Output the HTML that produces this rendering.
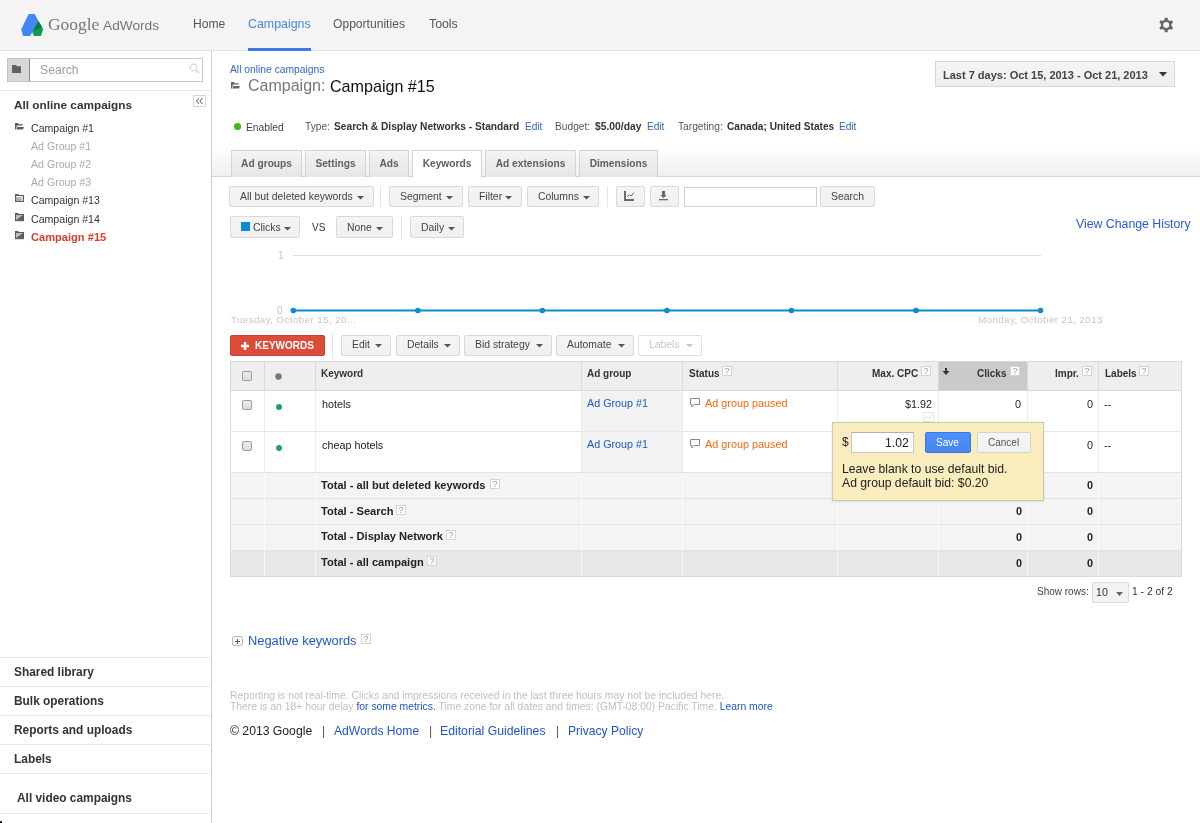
<!DOCTYPE html>
<html><head><meta charset="utf-8"><style>
html,body{margin:0;padding:0;width:1200px;height:823px;overflow:hidden;background:#fff;}
body{position:relative;font-family:"Liberation Sans",sans-serif;}
.t{position:absolute;white-space:nowrap;will-change:transform;}
.r{position:absolute;display:block;}
</style></head><body>
<div class="r" style="left:0px;top:0px;width:1200px;height:50px;background:#f4f4f4;"></div>
<div class="r" style="left:0px;top:50px;width:1200px;height:1px;background:#e1e1e1;"></div>
<svg class="r" style="left:18px;top:10px;" width="30" height="30" viewBox="0 0 30 30"><path d="M10.6,4.3 C11.3,3.8 16,3.8 16.8,4.3 L20.4,11 L12.1,25.9 L5.1,25.9 L3.2,19.2 Z" fill="#4285f4"/><path d="M20.4,11 L25.1,19.3 L23,25.9 L16,25.9 L14.1,22 Z" fill="#109d58"/><path d="M20.4,11 L24.1,17.2 L14.6,21.4 Z" fill="#0a7c3e"/></svg>
<div class="t " style="left:48.30px;top:16.27px;font-size:17.4px;line-height:17.4px;color:#72767b;font-family:'Liberation Serif',serif;">Google</div>
<div class="t " style="left:103.30px;top:19.30px;font-size:13.7px;line-height:13.7px;color:#72767b;">AdWords</div>
<div class="t " style="left:193.40px;top:18.36px;font-size:12.1px;line-height:12.1px;color:#555;">Home</div>
<div class="t " style="left:248.00px;top:18.30px;font-size:12.4px;line-height:12.4px;color:#4a86e8;">Campaigns</div>
<div class="t " style="left:333.40px;top:18.36px;font-size:12.1px;line-height:12.1px;color:#555;">Opportunities</div>
<div class="t " style="left:428.50px;top:18.19px;font-size:12.3px;line-height:12.3px;color:#555;">Tools</div>
<div class="r" style="left:248px;top:48px;width:63px;height:3px;background:#3b78e7;"></div>
<svg class="r" style="left:1158px;top:17px;" width="16" height="16" viewBox="0 0 16 16"><g transform="translate(8.2,8)" fill="#666"><rect x="-1.5" y="-7.2" width="3" height="3.7" rx="0.3" transform="rotate(0)"/><rect x="-1.5" y="-7.2" width="3" height="3.7" rx="0.3" transform="rotate(60)"/><rect x="-1.5" y="-7.2" width="3" height="3.7" rx="0.3" transform="rotate(120)"/><rect x="-1.5" y="-7.2" width="3" height="3.7" rx="0.3" transform="rotate(180)"/><rect x="-1.5" y="-7.2" width="3" height="3.7" rx="0.3" transform="rotate(240)"/><rect x="-1.5" y="-7.2" width="3" height="3.7" rx="0.3" transform="rotate(300)"/><circle r="5.4"/></g><circle cx="8.2" cy="8" r="3.0" fill="#f4f4f4"/></svg>
<div class="r" style="left:211px;top:51px;width:1px;height:772px;background:#cdcdcd;"></div>
<div class="r" style="left:7px;top:58px;width:23px;height:24px;background:#d8d8d8;border:1px solid #c6c6c6;box-sizing:border-box;border-right:1px solid #8f8f8f;"></div>
<svg class="r" style="left:12px;top:65px;" width="10" height="8" viewBox="0 0 10 8"><path d="M0,0 H4 L5,1.2 H9 V8 H0 Z" fill="#616161"/></svg>
<div class="r" style="left:30px;top:58px;width:173px;height:24px;background:#fff;border:1px solid #c9c9c9;border-left:none;box-sizing:border-box;"></div>
<div class="t " style="left:39.50px;top:64.47px;font-size:12.2px;line-height:12.2px;color:#9e9e9e;">Search</div>
<svg class="r" style="left:189px;top:63px;" width="11" height="11" viewBox="0 0 11 11"><circle cx="4.5" cy="4.5" r="3.3" fill="none" stroke="#ddd" stroke-width="1.4"/><path d="M7,7 L10,10" stroke="#ddd" stroke-width="1.8"/></svg>
<div class="r" style="left:0px;top:90px;width:211px;height:1px;background:#e5e5e5;"></div>
<div class="r" style="left:193px;top:95px;width:13px;height:12px;background:#fff;border:1px solid #d6d6d6;box-sizing:border-box;"></div>
<svg class="r" style="left:195px;top:97px;" width="10" height="8" viewBox="0 0 10 8"><path d="M4,1 L1.5,4 L4,7 M7.5,1 L5,4 L7.5,7" fill="none" stroke="#777" stroke-width="1.1"/></svg>
<div class="t " style="left:14.00px;top:99.91px;font-size:11.8px;line-height:11.8px;font-weight:bold;color:#333;">All online campaigns</div>
<div class="t " style="left:31.00px;top:123.13px;font-size:10.6px;line-height:10.6px;color:#333;">Campaign #1</div>
<svg class="r" style="left:15px;top:123px;" width="10" height="8" viewBox="0 0 10 8"><path d="M0,0 H2.8 L4,1.2 H7.8 V2.6 H2 L0.9,6.6 H0 Z" fill="#5c5c5c"/><path d="M2.4,4.1 H9 L7.9,6.6 H1.3 Z" fill="#5c5c5c"/></svg>
<div class="t " style="left:31.00px;top:141.23px;font-size:10.6px;line-height:10.6px;color:#aaa;">Ad Group #1</div>
<div class="t " style="left:31.00px;top:159.33px;font-size:10.6px;line-height:10.6px;color:#aaa;">Ad Group #2</div>
<div class="t " style="left:31.00px;top:177.33px;font-size:10.6px;line-height:10.6px;color:#aaa;">Ad Group #3</div>
<div class="t " style="left:31.00px;top:195.03px;font-size:10.6px;line-height:10.6px;color:#333;">Campaign #13</div>
<svg class="r" style="left:15px;top:194px;" width="9" height="8" viewBox="0 0 9 8"><rect x="0" y="0" width="3.5" height="1.5" fill="#5c5c5c"/><rect x="0.5" y="1.5" width="8" height="6" fill="#b0b0b0" stroke="#5c5c5c"/><rect x="1" y="2" width="5.5" height="1.2" fill="#eee"/><rect x="6.5" y="2" width="1.2" height="5" fill="#eee"/></svg>
<div class="t " style="left:31.00px;top:213.83px;font-size:10.6px;line-height:10.6px;color:#333;">Campaign #14</div>
<svg class="r" style="left:15px;top:213px;" width="9" height="9" viewBox="0 0 9 9"><rect x="0" y="0" width="3.5" height="1.5" fill="#5c5c5c"/><rect x="0.5" y="1.5" width="8" height="6.2" fill="#5c5c5c" stroke="#5c5c5c"/><path d="M1,2 H8 L1,7.2 Z" fill="#bdbdbd"/></svg>
<div class="t " style="left:31.00px;top:231.80px;font-size:11.1px;line-height:11.1px;font-weight:bold;color:#d6402f;">Campaign #15</div>
<svg class="r" style="left:15px;top:231px;" width="9" height="9" viewBox="0 0 9 9"><rect x="0" y="0" width="3.5" height="1.5" fill="#5c5c5c"/><rect x="0.5" y="1.5" width="8" height="6.2" fill="#5c5c5c" stroke="#5c5c5c"/><path d="M1,2 H8 L1,7.2 Z" fill="#bdbdbd"/></svg>
<div class="r" style="left:0px;top:657px;width:210px;height:1px;background:#e6e6e6;"></div>
<div class="r" style="left:0px;top:686px;width:210px;height:1px;background:#e6e6e6;"></div>
<div class="r" style="left:0px;top:715px;width:210px;height:1px;background:#e6e6e6;"></div>
<div class="r" style="left:0px;top:744px;width:210px;height:1px;background:#e6e6e6;"></div>
<div class="r" style="left:0px;top:773px;width:210px;height:1px;background:#e6e6e6;"></div>
<div class="r" style="left:0px;top:813px;width:210px;height:1px;background:#e6e6e6;"></div>
<div class="t " style="left:14.00px;top:667.03px;font-size:11.9px;line-height:11.9px;font-weight:bold;color:#333;">Shared library</div>
<div class="t " style="left:14.00px;top:696.03px;font-size:11.9px;line-height:11.9px;font-weight:bold;color:#333;">Bulk operations</div>
<div class="t " style="left:14.00px;top:724.83px;font-size:11.9px;line-height:11.9px;font-weight:bold;color:#333;">Reports and uploads</div>
<div class="t " style="left:14.00px;top:753.53px;font-size:11.9px;line-height:11.9px;font-weight:bold;color:#333;">Labels</div>
<div class="t " style="left:17.30px;top:792.83px;font-size:11.9px;line-height:11.9px;font-weight:bold;color:#333;">All video campaigns</div>
<div class="r" style="left:0px;top:821px;width:2px;height:2px;background:#111;border-radius:0 1px 0 0;"></div>
<div class="t " style="left:230.00px;top:64.68px;font-size:10.3px;line-height:10.3px;color:#3366cc;">All online campaigns</div>
<svg class="r" style="left:231px;top:82px;" width="10" height="8" viewBox="0 0 10 8"><path d="M0,0 H2.8 L4,1.2 H7.8 V2.6 H2 L0.9,6.6 H0 Z" fill="#666"/><path d="M2.4,4.1 H9 L7.9,6.6 H1.3 Z" fill="#666"/></svg>
<div class="t " style="left:247.70px;top:77.76px;font-size:16px;line-height:16px;color:#777;">Campaign: </div>
<div class="t " style="left:329.60px;top:77.67px;font-size:16.1px;line-height:16.1px;color:#111;">Campaign #15</div>
<div class="r" style="left:935px;top:61px;width:240px;height:26px;background:linear-gradient(#f5f5f5,#ededed);border:1px solid #d8d8d8;box-sizing:border-box;"></div>
<div class="t " style="left:943.00px;top:69.69px;font-size:11px;line-height:11px;font-weight:bold;color:#444;">Last 7 days: Oct 15, 2013 - Oct 21, 2013</div>
<svg class="r" style="left:1159px;top:72px;" width="9" height="5" viewBox="0 0 9 5"><path d="M0,0 H8 L4,4.5 Z" fill="#333"/></svg>
<svg class="r" style="left:233px;top:122px;" width="9" height="9" viewBox="0 0 9 9"><circle cx="4.5" cy="4.5" r="3.6" fill="#3dbb1f"/></svg>
<div class="t " style="left:246.40px;top:123.08px;font-size:10.3px;line-height:10.3px;color:#444;">Enabled</div>
<div class="t " style="left:304.80px;top:121.87px;font-size:10.2px;line-height:10.2px;color:#555;">Type: </div>
<div class="t " style="left:333.90px;top:121.87px;font-size:10.2px;line-height:10.2px;font-weight:bold;color:#333;">Search &amp; Display Networks - Standard</div>
<div class="t " style="left:525.40px;top:121.95px;font-size:10.1px;line-height:10.1px;color:#3366cc;">Edit</div>
<div class="t " style="left:555.30px;top:121.87px;font-size:10.2px;line-height:10.2px;color:#555;">Budget: </div>
<div class="t " style="left:594.80px;top:121.78px;font-size:10.3px;line-height:10.3px;font-weight:bold;color:#333;">$5.00/day</div>
<div class="t " style="left:647.30px;top:121.95px;font-size:10.1px;line-height:10.1px;color:#3366cc;">Edit</div>
<div class="t " style="left:677.50px;top:121.87px;font-size:10.2px;line-height:10.2px;color:#555;">Targeting: </div>
<div class="t " style="left:727.30px;top:121.95px;font-size:10.1px;line-height:10.1px;font-weight:bold;color:#333;">Canada; United States</div>
<div class="t " style="left:839.30px;top:121.95px;font-size:10.1px;line-height:10.1px;color:#3366cc;">Edit</div>
<div class="r" style="left:212px;top:150px;width:988px;height:27px;background:linear-gradient(to bottom,#fdfdfd 0%,#efefef 100%);"></div>
<div class="r" style="left:212px;top:176px;width:988px;height:1px;background:#d4d4d4;"></div>
<div class="r" style="left:231px;top:150px;width:71px;height:27px;background:linear-gradient(#f3f3f3,#e6e6e6);border:1px solid #d4d4d4;border-bottom:none;box-sizing:border-box;"></div>
<div class="t" style="left:231px;width:71px;text-align:center;top:158.97px;font-size:10.2px;line-height:10.2px;font-weight:bold;color:#5f5f5f;">Ad groups</div>
<div class="r" style="left:305px;top:150px;width:61px;height:27px;background:linear-gradient(#f3f3f3,#e6e6e6);border:1px solid #d4d4d4;border-bottom:none;box-sizing:border-box;"></div>
<div class="t" style="left:305px;width:61px;text-align:center;top:158.97px;font-size:10.2px;line-height:10.2px;font-weight:bold;color:#5f5f5f;">Settings</div>
<div class="r" style="left:369px;top:150px;width:40px;height:27px;background:linear-gradient(#f3f3f3,#e6e6e6);border:1px solid #d4d4d4;border-bottom:none;box-sizing:border-box;"></div>
<div class="t" style="left:369px;width:40px;text-align:center;top:158.97px;font-size:10.2px;line-height:10.2px;font-weight:bold;color:#5f5f5f;">Ads</div>
<div class="r" style="left:412px;top:150px;width:70px;height:28px;background:#fff;border:1px solid #d4d4d4;border-bottom:none;box-sizing:border-box;"></div>
<div class="t" style="left:412px;width:70px;text-align:center;top:158.97px;font-size:10.2px;line-height:10.2px;font-weight:bold;color:#5f5f5f;">Keywords</div>
<div class="r" style="left:485px;top:150px;width:91px;height:27px;background:linear-gradient(#f3f3f3,#e6e6e6);border:1px solid #d4d4d4;border-bottom:none;box-sizing:border-box;"></div>
<div class="t" style="left:485px;width:91px;text-align:center;top:158.97px;font-size:10.2px;line-height:10.2px;font-weight:bold;color:#5f5f5f;">Ad extensions</div>
<div class="r" style="left:579px;top:150px;width:79px;height:27px;background:linear-gradient(#f3f3f3,#e6e6e6);border:1px solid #d4d4d4;border-bottom:none;box-sizing:border-box;"></div>
<div class="t" style="left:579px;width:79px;text-align:center;top:158.97px;font-size:10.2px;line-height:10.2px;font-weight:bold;color:#5f5f5f;">Dimensions</div>
<div class="r" style="left:229px;top:186px;width:145px;height:21px;background:linear-gradient(#f5f5f5,#f0f0f0);border:1px solid #d9d9d9;border-radius:2px;box-sizing:border-box;"></div>
<div class="t " style="left:240.00px;top:191.50px;font-size:10.4px;line-height:10.4px;color:#444;">All but deleted keywords</div>
<svg class="r" style="left:357px;top:195px;" width="7" height="5" viewBox="0 0 7 5"><path d="M0,1 H7 L3.5,4.5 Z" fill="#555"/></svg>
<div class="r" style="left:380px;top:186px;width:1px;height:21px;background:#e5e5e5;"></div>
<div class="r" style="left:389px;top:186px;width:74px;height:21px;background:linear-gradient(#f5f5f5,#f0f0f0);border:1px solid #d9d9d9;border-radius:2px;box-sizing:border-box;"></div>
<div class="t " style="left:399.50px;top:191.50px;font-size:10.4px;line-height:10.4px;color:#444;">Segment</div>
<svg class="r" style="left:446px;top:195px;" width="7" height="5" viewBox="0 0 7 5"><path d="M0,1 H7 L3.5,4.5 Z" fill="#555"/></svg>
<div class="r" style="left:468px;top:186px;width:54px;height:21px;background:linear-gradient(#f5f5f5,#f0f0f0);border:1px solid #d9d9d9;border-radius:2px;box-sizing:border-box;"></div>
<div class="t " style="left:478.50px;top:191.50px;font-size:10.4px;line-height:10.4px;color:#444;">Filter</div>
<svg class="r" style="left:505px;top:195px;" width="7" height="5" viewBox="0 0 7 5"><path d="M0,1 H7 L3.5,4.5 Z" fill="#555"/></svg>
<div class="r" style="left:527px;top:186px;width:72px;height:21px;background:linear-gradient(#f5f5f5,#f0f0f0);border:1px solid #d9d9d9;border-radius:2px;box-sizing:border-box;"></div>
<div class="t " style="left:537.50px;top:191.50px;font-size:10.4px;line-height:10.4px;color:#444;">Columns</div>
<svg class="r" style="left:583px;top:195px;" width="7" height="5" viewBox="0 0 7 5"><path d="M0,1 H7 L3.5,4.5 Z" fill="#555"/></svg>
<div class="r" style="left:607px;top:186px;width:1px;height:21px;background:#e5e5e5;"></div>
<div class="r" style="left:616px;top:186px;width:29px;height:21px;background:linear-gradient(#f5f5f5,#f0f0f0);border:1px solid #d9d9d9;border-radius:2px;box-sizing:border-box;"></div>
<svg class="r" style="left:622px;top:189px;" width="14" height="14" viewBox="0 0 14 14"><rect x="2" y="2" width="2" height="10" fill="#6a6a6a"/><rect x="2" y="10" width="10" height="2" fill="#6a6a6a"/><path d="M5.3,8 L7.5,5.7 L9.2,7 L12,3.6" fill="none" stroke="#6a6a6a" stroke-width="1"/></svg>
<div class="r" style="left:650px;top:186px;width:29px;height:21px;background:linear-gradient(#f5f5f5,#f0f0f0);border:1px solid #d9d9d9;border-radius:2px;box-sizing:border-box;"></div>
<svg class="r" style="left:658px;top:190px;" width="12" height="12" viewBox="0 0 12 12"><rect x="4" y="1" width="3" height="4.5" fill="#6a6a6a"/><path d="M2.4,5 H8.6 L5.5,8.2 Z" fill="#6a6a6a"/><rect x="1" y="9" width="9" height="1.3" fill="#6a6a6a"/></svg>
<div class="r" style="left:684px;top:187px;width:133px;height:20px;background:#fff;border:1px solid #cfcfcf;box-sizing:border-box;"></div>
<div class="r" style="left:820px;top:186px;width:55px;height:21px;background:linear-gradient(#f5f5f5,#f0f0f0);border:1px solid #d9d9d9;border-radius:2px;box-sizing:border-box;"></div>
<div class="t " style="left:831.00px;top:191.50px;font-size:10.4px;line-height:10.4px;color:#444;">Search</div>
<div class="r" style="left:230px;top:216px;width:70px;height:22px;background:linear-gradient(#f5f5f5,#f0f0f0);border:1px solid #d9d9d9;border-radius:2px;box-sizing:border-box;"></div>
<div class="t " style="left:253.00px;top:222.70px;font-size:10.4px;line-height:10.4px;color:#444;">Clicks</div>
<svg class="r" style="left:284px;top:226px;" width="7" height="5" viewBox="0 0 7 5"><path d="M0,1 H7 L3.5,4.5 Z" fill="#555"/></svg>
<div class="r" style="left:241px;top:222px;width:9px;height:9px;background:#0a8ad0;"></div>
<div class="t " style="left:312.00px;top:223.03px;font-size:10px;line-height:10px;color:#333;">VS</div>
<div class="r" style="left:336px;top:216px;width:57px;height:22px;background:linear-gradient(#f5f5f5,#f0f0f0);border:1px solid #d9d9d9;border-radius:2px;box-sizing:border-box;"></div>
<div class="t " style="left:347.00px;top:222.70px;font-size:10.4px;line-height:10.4px;color:#444;">None</div>
<svg class="r" style="left:376px;top:226px;" width="7" height="5" viewBox="0 0 7 5"><path d="M0,1 H7 L3.5,4.5 Z" fill="#555"/></svg>
<div class="r" style="left:401px;top:216px;width:1px;height:23px;background:#e5e5e5;"></div>
<div class="r" style="left:410px;top:216px;width:54px;height:22px;background:linear-gradient(#f5f5f5,#f0f0f0);border:1px solid #d9d9d9;border-radius:2px;box-sizing:border-box;"></div>
<div class="t " style="left:421.00px;top:222.70px;font-size:10.4px;line-height:10.4px;color:#444;">Daily</div>
<svg class="r" style="left:448px;top:226px;" width="7" height="5" viewBox="0 0 7 5"><path d="M0,1 H7 L3.5,4.5 Z" fill="#555"/></svg>
<div class="t " style="left:1076.00px;top:217.89px;font-size:12.3px;line-height:12.3px;color:#2a5bd7;">View Change History</div>
<div class="t " style="left:278.00px;top:250.84px;font-size:10px;line-height:10px;color:#c4c4c4;">1</div>
<div class="r" style="left:293px;top:255px;width:748px;height:1px;background:#dedede;"></div>
<div class="t " style="left:277.20px;top:305.64px;font-size:10px;line-height:10px;color:#c4c4c4;">0</div>
<svg class="r" style="left:290px;top:308.8px;overflow:visible;" width="760" height="4" viewBox="0 0 760 4"><path d="M3.3000000000000114,1.5 H750.48" stroke="#0b8bd0" stroke-width="2"/><circle cx="3.30" cy="1.5" r="2.8" fill="#0b8bd0"/><circle cx="127.83" cy="1.5" r="2.8" fill="#0b8bd0"/><circle cx="252.36" cy="1.5" r="2.8" fill="#0b8bd0"/><circle cx="376.89" cy="1.5" r="2.8" fill="#0b8bd0"/><circle cx="501.42" cy="1.5" r="2.8" fill="#0b8bd0"/><circle cx="625.95" cy="1.5" r="2.8" fill="#0b8bd0"/><circle cx="750.48" cy="1.5" r="2.8" fill="#0b8bd0"/></svg>
<div class="t " style="left:231.40px;top:315.10px;font-size:9.8px;line-height:9.8px;color:#c6c6c6;letter-spacing:0.4px;">Tuesday, October 15, 20...</div>
<div class="t " style="left:978.40px;top:315.10px;font-size:9.8px;line-height:9.8px;color:#c6c6c6;letter-spacing:0.4px;">Monday, October 21, 2013</div>
<div class="r" style="left:230px;top:335px;width:95px;height:21px;background:#dd4b39;border:1px solid #c6402f;border-radius:2px;box-sizing:border-box;"></div>
<svg class="r" style="left:241px;top:342px;" width="8" height="8" viewBox="0 0 8 8"><path d="M2.8,0 H5.2 V2.8 H8 V5.2 H5.2 V8 H2.8 V5.2 H0 V2.8 H2.8 Z" fill="#fff"/></svg>
<div class="t " style="left:255.40px;top:341.14px;font-size:10px;line-height:10px;font-weight:bold;color:#fff;">KEYWORDS</div>
<div class="r" style="left:332px;top:333px;width:1px;height:26px;background:#e5e5e5;"></div>
<div class="r" style="left:341px;top:335px;width:50px;height:21px;background:linear-gradient(#f5f5f5,#f0f0f0);border:1px solid #d9d9d9;border-radius:2px;box-sizing:border-box;"></div>
<div class="t " style="left:351.50px;top:339.70px;font-size:10.4px;line-height:10.4px;color:#444;">Edit</div>
<svg class="r" style="left:375px;top:343px;" width="7" height="5" viewBox="0 0 7 5"><path d="M0,1 H7 L3.5,4.5 Z" fill="#555"/></svg>
<div class="r" style="left:396px;top:335px;width:64px;height:21px;background:linear-gradient(#f5f5f5,#f0f0f0);border:1px solid #d9d9d9;border-radius:2px;box-sizing:border-box;"></div>
<div class="t " style="left:406.50px;top:339.70px;font-size:10.4px;line-height:10.4px;color:#444;">Details</div>
<svg class="r" style="left:444px;top:343px;" width="7" height="5" viewBox="0 0 7 5"><path d="M0,1 H7 L3.5,4.5 Z" fill="#555"/></svg>
<div class="r" style="left:464px;top:335px;width:88px;height:21px;background:linear-gradient(#f5f5f5,#f0f0f0);border:1px solid #d9d9d9;border-radius:2px;box-sizing:border-box;"></div>
<div class="t " style="left:474.50px;top:339.70px;font-size:10.4px;line-height:10.4px;color:#444;">Bid strategy</div>
<svg class="r" style="left:536px;top:343px;" width="7" height="5" viewBox="0 0 7 5"><path d="M0,1 H7 L3.5,4.5 Z" fill="#555"/></svg>
<div class="r" style="left:556px;top:335px;width:78px;height:21px;background:linear-gradient(#f5f5f5,#f0f0f0);border:1px solid #d9d9d9;border-radius:2px;box-sizing:border-box;"></div>
<div class="t " style="left:567.00px;top:339.70px;font-size:10.4px;line-height:10.4px;color:#444;">Automate</div>
<svg class="r" style="left:618px;top:343px;" width="7" height="5" viewBox="0 0 7 5"><path d="M0,1 H7 L3.5,4.5 Z" fill="#555"/></svg>
<div class="r" style="left:638px;top:335px;width:64px;height:21px;background:#fff;border:1px solid #e0e0e0;border-radius:2px;box-sizing:border-box;"></div>
<div class="t " style="left:649.00px;top:339.70px;font-size:10.4px;line-height:10.4px;color:#c6c6c6;">Labels</div>
<svg class="r" style="left:686px;top:343px;" width="7" height="5" viewBox="0 0 7 5"><path d="M0,1 H7 L3.5,4.5 Z" fill="#c6c6c6"/></svg>
<div class="r" style="left:230px;top:361px;width:952px;height:216px;background:#fff;border:1px solid #dadada;box-sizing:border-box;"></div>
<div class="r" style="left:231px;top:362px;width:950px;height:28px;background:#eeeeee;"></div>
<div class="r" style="left:939px;top:362px;width:88px;height:28px;background:#cacaca;"></div>
<div class="r" style="left:231px;top:390px;width:950px;height:1px;background:#d9d9d9;"></div>
<div class="r" style="left:264px;top:362px;width:1px;height:28px;background:#dadada;"></div>
<div class="r" style="left:315px;top:362px;width:1px;height:28px;background:#dadada;"></div>
<div class="r" style="left:581px;top:362px;width:1px;height:28px;background:#dadada;"></div>
<div class="r" style="left:682px;top:362px;width:1px;height:28px;background:#dadada;"></div>
<div class="r" style="left:837px;top:362px;width:1px;height:28px;background:#dadada;"></div>
<div class="r" style="left:938px;top:362px;width:1px;height:28px;background:#dadada;"></div>
<div class="r" style="left:1027px;top:362px;width:1px;height:28px;background:#dadada;"></div>
<div class="r" style="left:1098px;top:362px;width:1px;height:28px;background:#dadada;"></div>
<div class="r" style="left:582px;top:391px;width:100px;height:81px;background:#f2f2f2;"></div>
<div class="r" style="left:264px;top:391px;width:1px;height:81px;background:#ededed;"></div>
<div class="r" style="left:315px;top:391px;width:1px;height:81px;background:#ededed;"></div>
<div class="r" style="left:581px;top:391px;width:1px;height:81px;background:#ededed;"></div>
<div class="r" style="left:682px;top:391px;width:1px;height:81px;background:#ededed;"></div>
<div class="r" style="left:837px;top:391px;width:1px;height:81px;background:#ededed;"></div>
<div class="r" style="left:938px;top:391px;width:1px;height:81px;background:#ededed;"></div>
<div class="r" style="left:1027px;top:391px;width:1px;height:81px;background:#ededed;"></div>
<div class="r" style="left:1098px;top:391px;width:1px;height:81px;background:#ededed;"></div>
<div class="r" style="left:231px;top:431px;width:950px;height:1px;background:#e8e8e8;"></div>
<div class="r" style="left:231px;top:472px;width:950px;height:104px;background:#f4f4f4;"></div>
<div class="r" style="left:231px;top:550px;width:950px;height:26px;background:#e8e8e8;"></div>
<div class="r" style="left:231px;top:472px;width:950px;height:1px;background:#e3e3e3;"></div>
<div class="r" style="left:231px;top:498px;width:950px;height:1px;background:#e3e3e3;"></div>
<div class="r" style="left:231px;top:524px;width:950px;height:1px;background:#e3e3e3;"></div>
<div class="r" style="left:231px;top:550px;width:950px;height:1px;background:#e3e3e3;"></div>
<div class="r" style="left:264px;top:473px;width:1px;height:103px;background:rgba(255,255,255,0.6);"></div>
<div class="r" style="left:315px;top:473px;width:1px;height:103px;background:rgba(255,255,255,0.6);"></div>
<div class="r" style="left:581px;top:473px;width:1px;height:103px;background:rgba(255,255,255,0.6);"></div>
<div class="r" style="left:682px;top:473px;width:1px;height:103px;background:rgba(255,255,255,0.6);"></div>
<div class="r" style="left:837px;top:473px;width:1px;height:103px;background:rgba(255,255,255,0.6);"></div>
<div class="r" style="left:938px;top:473px;width:1px;height:103px;background:rgba(255,255,255,0.6);"></div>
<div class="r" style="left:1027px;top:473px;width:1px;height:103px;background:rgba(255,255,255,0.6);"></div>
<div class="r" style="left:1098px;top:473px;width:1px;height:103px;background:rgba(255,255,255,0.6);"></div>
<div class="r" style="left:242px;top:371px;width:10px;height:10px;background:linear-gradient(#ececec,#dcdcdc);border:1px solid #9c9c9c;border-radius:2px;box-sizing:border-box;"></div>
<svg class="r" style="left:275px;top:373px;" width="7" height="7" viewBox="0 0 7 7"><circle cx="3.5" cy="3.5" r="3.2" fill="#777"/></svg>
<div class="t " style="left:321.30px;top:368.84px;font-size:10px;line-height:10px;font-weight:bold;color:#333;">Keyword</div>
<div class="t " style="left:587.00px;top:369.04px;font-size:10px;line-height:10px;font-weight:bold;color:#333;">Ad group</div>
<div class="t " style="left:688.50px;top:369.04px;font-size:10px;line-height:10px;font-weight:bold;color:#333;">Status</div>
<div class="r" style="left:722px;top:366px;width:10px;height:10px;background:#fff;border:1px solid #d4d4d4;box-sizing:border-box;"></div>
<div class="t" style="left:722px;top:365.8px;width:10px;text-align:center;font-size:9px;line-height:10px;color:#999;">?</div>
<div class="t " style="right:281.50px;top:369.04px;font-size:10px;line-height:10px;font-weight:bold;color:#333;">Max. CPC</div>
<div class="r" style="left:921px;top:366px;width:10px;height:10px;background:#fff;border:1px solid #d4d4d4;box-sizing:border-box;"></div>
<div class="t" style="left:921px;top:365.8px;width:10px;text-align:center;font-size:9px;line-height:10px;color:#999;">?</div>
<svg class="r" style="left:942px;top:368px;" width="8" height="8" viewBox="0 0 8 8"><path d="M3,0 H5 V3 H7.5 L4,7 L0.5,3 H3 Z" fill="#333"/></svg>
<div class="t " style="right:193.60px;top:369.04px;font-size:10px;line-height:10px;font-weight:bold;color:#333;">Clicks</div>
<div class="r" style="left:1010px;top:366px;width:10px;height:10px;background:#fff;border:1px solid #d4d4d4;box-sizing:border-box;"></div>
<div class="t" style="left:1010px;top:365.8px;width:10px;text-align:center;font-size:9px;line-height:10px;color:#999;">?</div>
<div class="t " style="right:121.60px;top:369.04px;font-size:10px;line-height:10px;font-weight:bold;color:#333;">Impr.</div>
<div class="r" style="left:1082px;top:366px;width:10px;height:10px;background:#fff;border:1px solid #d4d4d4;box-sizing:border-box;"></div>
<div class="t" style="left:1082px;top:365.8px;width:10px;text-align:center;font-size:9px;line-height:10px;color:#999;">?</div>
<div class="t " style="left:1104.50px;top:369.04px;font-size:10px;line-height:10px;font-weight:bold;color:#333;">Labels</div>
<div class="r" style="left:1139px;top:366px;width:10px;height:10px;background:#fff;border:1px solid #d4d4d4;box-sizing:border-box;"></div>
<div class="t" style="left:1139px;top:365.8px;width:10px;text-align:center;font-size:9px;line-height:10px;color:#999;">?</div>
<div class="r" style="left:242px;top:400px;width:10px;height:10px;background:linear-gradient(#ececec,#dcdcdc);border:1px solid #9c9c9c;border-radius:2px;box-sizing:border-box;"></div>
<svg class="r" style="left:276px;top:404px;" width="7" height="7" viewBox="0 0 7 7"><circle cx="3" cy="3" r="3" fill="#1da462"/></svg>
<div class="t " style="left:322.00px;top:399.16px;font-size:10.8px;line-height:10.8px;color:#222;">hotels</div>
<div class="t " style="left:587.00px;top:398.40px;font-size:10.75px;line-height:10.75px;color:#2156c8;">Ad Group #1</div>
<svg class="r" style="left:690px;top:398px;" width="11" height="10" viewBox="0 0 11 10"><path d="M0.5,0.5 H9.5 V6.5 H4 L1.8,9 V6.5 H0.5 Z" fill="#fff" stroke="#888" stroke-width="1"/></svg>
<div class="t " style="left:704.90px;top:398.32px;font-size:10.85px;line-height:10.85px;color:#f76a12;">Ad group paused</div>
<div class="r" style="left:242px;top:441px;width:10px;height:10px;background:linear-gradient(#ececec,#dcdcdc);border:1px solid #9c9c9c;border-radius:2px;box-sizing:border-box;"></div>
<svg class="r" style="left:276px;top:445px;" width="7" height="7" viewBox="0 0 7 7"><circle cx="3" cy="3" r="3" fill="#1da462"/></svg>
<div class="t " style="left:322.00px;top:440.16px;font-size:10.8px;line-height:10.8px;color:#222;">cheap hotels</div>
<div class="t " style="left:587.00px;top:439.40px;font-size:10.75px;line-height:10.75px;color:#2156c8;">Ad Group #1</div>
<svg class="r" style="left:690px;top:439px;" width="11" height="10" viewBox="0 0 11 10"><path d="M0.5,0.5 H9.5 V6.5 H4 L1.8,9 V6.5 H0.5 Z" fill="#fff" stroke="#888" stroke-width="1"/></svg>
<div class="t " style="left:704.90px;top:439.32px;font-size:10.85px;line-height:10.85px;color:#f76a12;">Ad group paused</div>
<div class="t " style="right:268.00px;top:398.66px;font-size:10.8px;line-height:10.8px;color:#222;">$1.92</div>
<svg class="r" style="left:923px;top:412px;" width="11" height="10" viewBox="0 0 11 10"><rect x="0.5" y="0.5" width="10" height="9" fill="none" stroke="#e6e6e6"/><path d="M2,7 L4.5,4.5 L6,6 L9,2.5" fill="none" stroke="#dcdcdc"/></svg>
<div class="t " style="right:178.60px;top:398.66px;font-size:10.8px;line-height:10.8px;color:#222;">0</div>
<div class="t " style="right:107.20px;top:398.66px;font-size:10.8px;line-height:10.8px;color:#222;">0</div>
<div class="t " style="left:1104.00px;top:398.66px;font-size:10.8px;line-height:10.8px;color:#222;">--</div>
<div class="t " style="right:107.20px;top:439.66px;font-size:10.8px;line-height:10.8px;color:#222;">0</div>
<div class="t " style="left:1104.00px;top:439.66px;font-size:10.8px;line-height:10.8px;color:#222;">--</div>
<div class="t " style="left:321.25px;top:479.60px;font-size:11.1px;line-height:11.1px;font-weight:bold;color:#222;">Total - all but deleted keywords</div>
<div class="r" style="left:490px;top:479px;width:10px;height:10px;background:#fff;border:1px solid #d4d4d4;box-sizing:border-box;"></div>
<div class="t" style="left:490px;top:478.8px;width:10px;text-align:center;font-size:9px;line-height:10px;color:#999;">?</div>
<div class="t " style="right:107.00px;top:479.86px;font-size:10.8px;line-height:10.8px;font-weight:bold;color:#222;">0</div>
<div class="t " style="left:321.25px;top:505.50px;font-size:11.1px;line-height:11.1px;font-weight:bold;color:#222;">Total - Search</div>
<div class="r" style="left:396px;top:505px;width:10px;height:10px;background:#fff;border:1px solid #d4d4d4;box-sizing:border-box;"></div>
<div class="t" style="left:396px;top:504.8px;width:10px;text-align:center;font-size:9px;line-height:10px;color:#999;">?</div>
<div class="t " style="right:107.00px;top:505.76px;font-size:10.8px;line-height:10.8px;font-weight:bold;color:#222;">0</div>
<div class="t " style="right:178.00px;top:505.76px;font-size:10.8px;line-height:10.8px;font-weight:bold;color:#222;">0</div>
<div class="t " style="left:321.25px;top:531.40px;font-size:11.1px;line-height:11.1px;font-weight:bold;color:#222;">Total - Display Network</div>
<div class="r" style="left:446px;top:530px;width:10px;height:10px;background:#fff;border:1px solid #d4d4d4;box-sizing:border-box;"></div>
<div class="t" style="left:446px;top:529.8px;width:10px;text-align:center;font-size:9px;line-height:10px;color:#999;">?</div>
<div class="t " style="right:107.00px;top:531.66px;font-size:10.8px;line-height:10.8px;font-weight:bold;color:#222;">0</div>
<div class="t " style="right:178.00px;top:531.66px;font-size:10.8px;line-height:10.8px;font-weight:bold;color:#222;">0</div>
<div class="t " style="left:321.25px;top:557.30px;font-size:11.1px;line-height:11.1px;font-weight:bold;color:#222;">Total - all campaign</div>
<div class="r" style="left:427px;top:556px;width:10px;height:10px;background:#fff;border:1px solid #d4d4d4;box-sizing:border-box;"></div>
<div class="t" style="left:427px;top:555.8px;width:10px;text-align:center;font-size:9px;line-height:10px;color:#999;">?</div>
<div class="t " style="right:107.00px;top:557.56px;font-size:10.8px;line-height:10.8px;font-weight:bold;color:#222;">0</div>
<div class="t " style="right:178.00px;top:557.56px;font-size:10.8px;line-height:10.8px;font-weight:bold;color:#222;">0</div>
<div class="r" style="left:832px;top:422px;width:212px;height:79px;background:#f9edbe;border:1px solid #cbc7b8;box-sizing:border-box;box-shadow:0 1px 2px rgba(0,0,0,0.1);"></div>
<div class="t " style="left:842.00px;top:436.14px;font-size:12px;line-height:12px;color:#222;">$</div>
<div class="r" style="left:851px;top:432px;width:63px;height:21px;background:#fff;border:1px solid #c6c6c6;border-top-color:#b0b0b0;box-sizing:border-box;"></div>
<div class="t " style="right:291.40px;top:436.97px;font-size:12.2px;line-height:12.2px;color:#222;">1.02</div>
<div class="r" style="left:925px;top:432px;width:46px;height:21px;background:linear-gradient(#4d90fe,#4787ed);border:1px solid #3079ed;border-radius:2px;box-sizing:border-box;"></div>
<div class="t " style="left:936.40px;top:438.44px;font-size:10px;line-height:10px;color:#fff;">Save</div>
<div class="r" style="left:977px;top:432px;width:54px;height:21px;background:linear-gradient(#f5f5f5,#f1f1f1);border:1px solid #d4d4d4;border-radius:2px;box-sizing:border-box;"></div>
<div class="t " style="left:988.20px;top:438.44px;font-size:10px;line-height:10px;color:#555;">Cancel</div>
<div class="t " style="left:842.00px;top:462.97px;font-size:12.2px;line-height:12.2px;color:#222;">Leave blank to use default bid.</div>
<div class="t " style="left:842.00px;top:476.77px;font-size:12.2px;line-height:12.2px;color:#222;">Ad group default bid: $0.20</div>
<div class="t " style="left:1036.50px;top:586.53px;font-size:10px;line-height:10px;color:#444;">Show rows:</div>
<div class="r" style="left:1092px;top:582px;width:37px;height:21px;background:#f3f3f3;border:1px solid #d9d9d9;border-radius:2px;box-sizing:border-box;"></div>
<div class="t " style="left:1095.60px;top:586.63px;font-size:10.6px;line-height:10.6px;color:#333;">10</div>
<svg class="r" style="left:1116px;top:592px;" width="7" height="4" viewBox="0 0 7 4"><path d="M0,0 H7 L3.5,4 Z" fill="#666"/></svg>
<div class="t " style="left:1132.40px;top:586.88px;font-size:10.3px;line-height:10.3px;color:#333;">1 - 2 of 2</div>
<div class="r" style="left:232px;top:636px;width:11px;height:10px;background:#fafafa;border:1px solid #bdbdbd;border-radius:2px;box-sizing:border-box;"></div>
<div class="r" style="left:235px;top:641px;width:5px;height:1px;background:#555;"></div>
<div class="r" style="left:237px;top:639px;width:1px;height:5px;background:#555;"></div>
<div class="t " style="left:248.25px;top:635.22px;font-size:12.85px;line-height:12.85px;color:#2156c8;">Negative keywords</div>
<div class="r" style="left:361px;top:634px;width:10px;height:10px;background:#fff;border:1px solid #d4d4d4;box-sizing:border-box;"></div>
<div class="t" style="left:361px;top:633.8px;width:10px;text-align:center;font-size:9px;line-height:10px;color:#999;">?</div>
<div class="t " style="left:230.00px;top:691.33px;font-size:10.36px;line-height:10.36px;color:#c0c0c0;">Reporting is not real-time. Clicks and impressions received in the last three hours may not be included here.</div>
<div class="t " style="left:230.00px;top:702.03px;font-size:10.36px;line-height:10.36px;color:#c0c0c0;">There is an 18+ hour delay <span style="color:#2156c8">for some metrics.</span> Time zone for all dates and times: (GMT-08:00) Pacific Time. <span style="color:#2156c8">Learn more</span></div>
<div class="t " style="left:229.50px;top:724.57px;font-size:12.2px;line-height:12.2px;color:#222;">&copy; 2013 Google</div>
<div class="t " style="left:322.00px;top:724.57px;font-size:12.2px;line-height:12.2px;color:#555;">|</div>
<div class="t " style="left:333.75px;top:724.66px;font-size:12.1px;line-height:12.1px;color:#2156c8;">AdWords Home</div>
<div class="t " style="left:429.00px;top:724.57px;font-size:12.2px;line-height:12.2px;color:#555;">|</div>
<div class="t " style="left:440.40px;top:724.53px;font-size:12.25px;line-height:12.25px;color:#2156c8;">Editorial Guidelines</div>
<div class="t " style="left:556.00px;top:724.57px;font-size:12.2px;line-height:12.2px;color:#555;">|</div>
<div class="t " style="left:568.00px;top:724.66px;font-size:12.1px;line-height:12.1px;color:#2156c8;">Privacy Policy</div>
</body></html>
